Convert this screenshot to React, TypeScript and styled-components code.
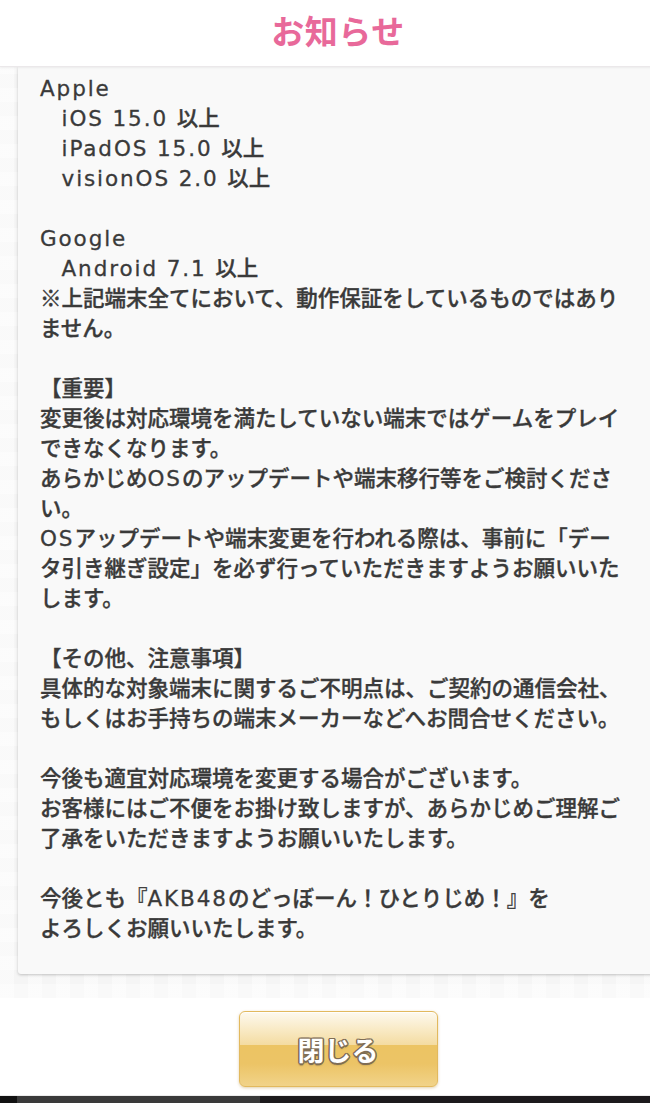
import styled, { createGlobalStyle } from "styled-components";

const GlobalStyle = createGlobalStyle`
  html, body {
    margin: 0;
    padding: 0;
    background: #ffffff;
    overflow: hidden;
  }
  body {
    font-family: "Noto Sans CJK JP", "Noto Sans", sans-serif;
  }
`;

const Screen = styled.div`
  width: 676px;
  display: flex;
  flex-direction: column;
`;

const Header = styled.header`
  height: 67px;
  display: flex;
  align-items: center;
  justify-content: center;
  padding-bottom: 6px;
  box-sizing: border-box;
  background: #ffffff;
  border-bottom: 1px solid #ebe8ea;
  box-shadow: 0 1px 2px rgba(0, 0, 0, 0.06);
  position: relative;
  z-index: 1;
`;

const Title = styled.h1`
  margin: 0;
  font-size: 33px;
  font-weight: 700;
  letter-spacing: 0.5px;
  color: #e8699a;
`;

const ScrollArea = styled.section`
  height: 931px;
  box-sizing: border-box;
  padding: 0 18px 24px;
  background-color: #f5f5f5;
  background-image: repeating-linear-gradient(
      90deg,
      rgba(255, 255, 255, 0.45) 0 14px,
      transparent 14px 28px
    ),
    repeating-linear-gradient(
      0deg,
      rgba(255, 255, 255, 0.4) 0 14px,
      transparent 14px 28px
    );
`;

const Panel = styled.article`
  height: 100%;
  box-sizing: border-box;
  padding: 5px 22px 0;
  background: #f9f9f9;
  border-radius: 0 0 3px 3px;
  box-shadow: 0 1px 3px rgba(0, 0, 0, 0.22);
`;

const Line = styled.div`
  height: 30px;
  white-space: pre;
  font-size: 21.5px;
  line-height: 30px;
  font-weight: 500;
  color: #3a3a3a;
  -webkit-text-stroke: 0.35px #3a3a3a;
`;

// Latin runs get a wider face so they sit like the kana around them
const Latin = styled.span`
  font-family: "DejaVu Sans", "Noto Sans", sans-serif;
  font-weight: 400;
  letter-spacing: 1.9px;
  line-height: 0;
  -webkit-text-stroke: 0.3px #3a3a3a;
`;

const Footer = styled.footer`
  height: 98px;
  box-sizing: border-box;
  padding-top: 13px;
  display: flex;
  justify-content: center;
  align-items: flex-start;
  background: #ffffff;
  border-bottom: 1px solid #ececec;
`;

const CloseButton = styled.button`
  width: 199px;
  height: 76px;
  border: 1px solid #e2b95e;
  border-radius: 6px;
  cursor: pointer;
  background: linear-gradient(
    180deg,
    #fdf9ef 0%,
    #f9ebc8 22%,
    #f4dca2 44%,
    #ecc463 45%,
    #ecc466 70%,
    #f1d389 100%
  );
  box-shadow: 0 1px 3px rgba(190, 150, 70, 0.45),
    inset 0 1px 0 rgba(255, 255, 255, 0.8);
  font-family: "Noto Sans CJK JP", sans-serif;
  font-size: 27px;
  font-weight: 700;
  color: #ffffff;
  letter-spacing: 0;
  text-shadow: 1.5px 0 0 #7f6d55, -1.5px 0 0 #7f6d55, 0 1.5px 0 #7f6d55,
    0 -1.5px 0 #7f6d55, 1px 1px 0 #7f6d55, -1px -1px 0 #7f6d55,
    1px -1px 0 #7f6d55, -1px 1px 0 #7f6d55, 0 2px 2px rgba(0, 0, 0, 0.3);
`;

const BottomBar = styled.div`
  height: 7px;
  background: linear-gradient(
    90deg,
    #121212 0 17px,
    #3a3a3a 17px 260px,
    #1c1a1c 260px 100%
  );
`;

const notice = `Apple
　iOS 15.0 以上
　iPadOS 15.0 以上
　visionOS 2.0 以上

Google
　Android 7.1 以上
※上記端末全てにおいて、動作保証をしているものではあり
ません。

【重要】
変更後は対応環境を満たしていない端末ではゲームをプレイ
できなくなります。
あらかじめOSのアップデートや端末移行等をご検討くださ
い。
OSアップデートや端末変更を行われる際は、事前に「デー
タ引き継ぎ設定」を必ず行っていただきますようお願いいた
します。

【その他、注意事項】
具体的な対象端末に関するご不明点は、ご契約の通信会社、
もしくはお手持ちの端末メーカーなどへお問合せください。

今後も適宜対応環境を変更する場合がございます。
お客様にはご不便をお掛け致しますが、あらかじめご理解ご
了承をいただきますようお願いいたします。

今後とも『AKB48のどっぼーん！ひとりじめ！』を
よろしくお願いいたします。`;

function renderLine(line: string) {
  return line
    .split(/([A-Za-z0-9][A-Za-z0-9. ]*)/)
    .filter((part) => part !== "")
    .map((part, i) =>
      /^[A-Za-z0-9]/.test(part) ? <Latin key={i}>{part}</Latin> : <span key={i}>{part}</span>
    );
}

export default function App() {
  return (
    <>
      <GlobalStyle />
      <Screen>
        <Header>
          <Title>お知らせ</Title>
        </Header>
        <ScrollArea>
          <Panel>
            {notice.split("\n").map((line, i) => (
              <Line key={i}>{renderLine(line)}</Line>
            ))}
          </Panel>
        </ScrollArea>
        <Footer>
          <CloseButton type="button">閉じる</CloseButton>
        </Footer>
        <BottomBar />
      </Screen>
    </>
  );
}
